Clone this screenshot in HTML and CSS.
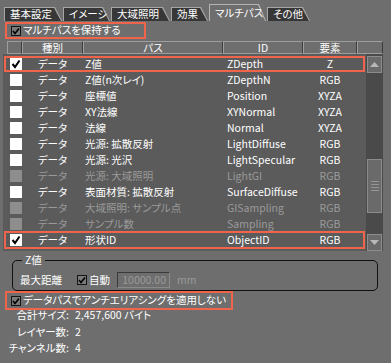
FILE: index.html
```html
<!DOCTYPE html>
<html lang="ja">
<head>
<meta charset="utf-8">
<title>マルチパス</title>
<link rel="stylesheet" href="styles.css">
</head>
<body>
<div class="tabs">
    <div class="tab t-basic">基本設定</div>
    <div class="tab t-image">イメージ</div>
    <div class="tab t-gi">大域照明</div>
    <div class="tab t-effect">効果</div>
    <div class="tab t-multi active">マルチパス</div>
    <div class="tab t-other">その他</div>
</div>

<div class="check-line keep">
    <svg class="small-check" width="10" height="10" viewBox="0 0 10 10"><rect x="0.5" y="0.5" width="9" height="9" fill="#7a7a7a" stroke="#151515"/><path d="M2 5 L4 7.5 L8 2.5" fill="none" stroke="#000" stroke-width="1.6"/></svg>
    <span>マルチパスを保持する</span>
</div>

<div class="pass-table">
    <div class="head">
        <span></span>
        <span>種別</span>
        <span>パス</span>
        <span>ID</span>
        <span>要素</span>
        <span></span>
    </div>
    <div class="list-wrap">
        <div class="rows">
            <div class="row marked">
                <i class="cb"><svg width="12" height="12" viewBox="0 0 12 12"><path d="M2.5 6 L5 9 L9.5 2.5" fill="none" stroke="#000" stroke-width="2"/></svg></i>
                <span class="kind">データ</span><span class="path">Z値</span><span class="pid">ZDepth</span><span class="elem">Z</span>
            </div>
            <div class="row">
                <i class="cb"></i>
                <span class="kind">データ</span><span class="path">Z値(n次レイ)</span><span class="pid">ZDepthN</span><span class="elem">RGB</span>
            </div>
            <div class="row">
                <i class="cb"></i>
                <span class="kind">データ</span><span class="path">座標値</span><span class="pid">Position</span><span class="elem">XYZA</span>
            </div>
            <div class="row">
                <i class="cb"></i>
                <span class="kind">データ</span><span class="path">XY法線</span><span class="pid">XYNormal</span><span class="elem">XYZA</span>
            </div>
            <div class="row">
                <i class="cb"></i>
                <span class="kind">データ</span><span class="path">法線</span><span class="pid">Normal</span><span class="elem">XYZA</span>
            </div>
            <div class="row">
                <i class="cb"></i>
                <span class="kind">データ</span><span class="path">光源: 拡散反射</span><span class="pid">LightDiffuse</span><span class="elem">RGB</span>
            </div>
            <div class="row">
                <i class="cb"></i>
                <span class="kind">データ</span><span class="path">光源: 光沢</span><span class="pid">LightSpecular</span><span class="elem">RGB</span>
            </div>
            <div class="row disabled">
                <i class="cb"></i>
                <span class="kind">データ</span><span class="path">光源: 大域照明</span><span class="pid">LightGI</span><span class="elem">RGB</span>
            </div>
            <div class="row">
                <i class="cb"></i>
                <span class="kind">データ</span><span class="path">表面材質: 拡散反射</span><span class="pid">SurfaceDiffuse</span><span class="elem">RGB</span>
            </div>
            <div class="row disabled">
                <i class="cb"></i>
                <span class="kind">データ</span><span class="path">大域照明: サンプル点</span><span class="pid">GISampling</span><span class="elem">RGB</span>
            </div>
            <div class="row disabled">
                <i class="cb"></i>
                <span class="kind">データ</span><span class="path">サンプル数</span><span class="pid">Sampling</span><span class="elem">RGB</span>
            </div>
            <div class="row marked">
                <i class="cb"><svg width="12" height="12" viewBox="0 0 12 12"><path d="M2.5 6 L5 9 L9.5 2.5" fill="none" stroke="#000" stroke-width="2"/></svg></i>
                <span class="kind">データ</span><span class="path">形状ID</span><span class="pid">ObjectID</span><span class="elem">RGB</span>
            </div>
        </div>
        <div class="scrollbar">
            <div class="sb-btn"><svg width="9" height="5" viewBox="0 0 9 5"><path d="M0 5 L4.5 0 L9 5 Z" fill="#b8b8b8"/></svg></div>
            <div class="sb-track">
                <div class="sb-thumb"><i></i><i></i><i></i><i></i></div>
            </div>
            <div class="sb-btn"><svg width="9" height="5" viewBox="0 0 9 5"><path d="M0 0 L4.5 5 L9 0 Z" fill="#b8b8b8"/></svg></div>
        </div>
    </div>
</div>

<fieldset class="group">
    <legend>Z値</legend>
    <div class="group-row">
        <span class="label">最大距離</span>
        <svg class="small-check" width="10" height="10" viewBox="0 0 10 10"><rect x="0.5" y="0.5" width="9" height="9" fill="#7a7a7a" stroke="#151515"/><path d="M2 5 L4 7.5 L8 2.5" fill="none" stroke="#000" stroke-width="1.6"/></svg>
        <span class="auto">自動</span>
        <div class="num-input">10000.00</div>
        <span class="unit">mm</span>
    </div>
</fieldset>

<div class="check-line antialias">
    <svg class="small-check" width="10" height="10" viewBox="0 0 10 10"><rect x="0.5" y="0.5" width="9" height="9" fill="#7a7a7a" stroke="#151515"/><path d="M2 5 L4 7.5 L8 2.5" fill="none" stroke="#000" stroke-width="1.6"/></svg>
    <span>データパスでアンチエリアシングを適用しない</span>
</div>

<div class="info">
    <span class="info-label">合計サイズ:</span><span>2,457,600 バイト</span>
    <span class="info-label">レイヤー数:</span><span>2</span>
    <span class="info-label">チャンネル数:</span><span>4</span>
</div>
</body>
</html>
```

FILE: styles.css
```css
* {
    box-sizing: border-box;
}

body {
    margin: 0;
    width: 391px;
    height: 363px;
    overflow: hidden;
    background-color: #6e6e6e;
    color: #ffffff;
    font-family: "Noto Sans CJK JP", sans-serif;
    font-size: 10.5px;
    font-feature-settings: "palt";
    line-height: 1;
    white-space: nowrap;
}

/* tabs */
.tabs {
    display: flex;
    align-items: flex-end;
    gap: 1px;
    height: 21px;
    padding-left: 4px;
}

.tab {
    position: relative;
    z-index: 0;
    height: 14px;
    padding-left: 6px;
    line-height: 14px;
    background-color: #a6a6a6;
    clip-path: polygon(0 0, calc(100% - 7px) 0, 100% 100%, 0 100%);
}

.tab::before {
    content: '';
    position: absolute;
    z-index: -1;
    top: 1px;
    left: 1px;
    right: 1px;
    bottom: 0;
    background-color: #373737;
    clip-path: polygon(0 0, calc(100% - 7px) 0, 100% 100%, 0 100%);
}

.t-basic { width: 58px; }
.t-image { width: 47px; }
.t-gi { width: 59px; }
.t-effect { width: 37px; }
.t-multi { width: 57px; }
.t-other { width: 43px; }

.tab.active {
    height: 17px;
    line-height: 17px;
    background-color: #b4b4b4;
}

.tab.active::before {
    background-color: #6e6e6e;
}

/* checkbox lines with red marks */
.check-line {
    display: flex;
    align-items: center;
    gap: 2px;
    border: 2px solid #f0644c;
    padding-left: 4px;
}

.small-check {
    flex: none;
}

.keep {
    width: 141px;
    height: 17px;
    margin: 1px 0 0 5px;
}

.antialias {
    width: 228px;
    height: 19px;
    margin: 0 0 0 5px;
}

/* table */
.pass-table {
    margin: 2px 8px 0 3px;
}

.head {
    display: grid;
    grid-template-columns: 15px 61px 140px 80px 54px 26px;
    height: 13px;
    margin-left: 4px;
}

.head span {
    border: 1px solid #9e9e9e;
    border-right-color: #3e3e3e;
    text-align: center;
    line-height: 11px;
}

.list-wrap {
    display: flex;
    height: 197px;
}

.rows {
    flex: 1;
    padding-top: 2px;
    background-color: #5b5b5b;
}

.row {
    position: relative;
    display: grid;
    grid-template-columns: 19px 61px 140px 80px 54px;
    align-items: center;
    height: 16px;
}

.row.marked::after {
    content: '';
    position: absolute;
    top: 0;
    bottom: 0;
    left: 1px;
    right: 1px;
    border: 2px solid #f0644c;
}

.row:last-child.marked::after {
    top: -1px;
    bottom: -1px;
}

.cb {
    display: block;
    width: 12px;
    height: 12px;
    margin-left: 7px;
    background-color: #ffffff;
}

.cb svg {
    display: block;
}

.kind {
    text-align: center;
}

.path {
    padding-left: 2px;
}

.pid {
    padding-left: 4px;
}

.elem {
    text-align: center;
}

.row.disabled {
    color: #9a9a9a;
}

.row.disabled .cb {
    background-color: #8e8e8e;
}

/* scrollbar */
.scrollbar {
    display: flex;
    flex-direction: column;
    width: 17px;
    background-color: #4a4a4a;
    padding: 2px 1px 0 1px;
}

.sb-btn {
    display: flex;
    align-items: center;
    justify-content: center;
    height: 17px;
    background-color: #6a6a6a;
    border: 1px solid #8c8c8c;
}

.sb-track {
    flex: 1;
    padding-top: 86px;
}

.sb-thumb {
    display: flex;
    flex-direction: column;
    align-items: center;
    justify-content: center;
    gap: 2px;
    height: 54px;
    background-color: #6a6a6a;
    border: 1px solid #8c8c8c;
}

.sb-thumb i {
    display: block;
    width: 8px;
    height: 1px;
    background-color: #959595;
}

/* Z group */
.group {
    margin: 3px 13px 0 12px;
    padding: 5px 0 1px 7px;
    border: 1px solid #111111;
    border-radius: 5px;
}

.group legend {
    margin-left: 2px;
    padding: 0 3px;
    line-height: 12px;
}

.group-row {
    display: flex;
    align-items: center;
    height: 18px;
}

.label {
    width: 57px;
}

.auto {
    margin-left: 2px;
}

.num-input {
    width: 53px;
    height: 16px;
    margin-left: 7px;
    padding-right: 3px;
    border: 1px solid #3a3a3a;
    border-right-color: #8a8a8a;
    border-bottom-color: #8a8a8a;
    color: #9a9a9a;
    text-align: right;
    line-height: 14px;
}

.unit {
    margin-left: 7px;
    color: #9a9a9a;
}

/* summary */
.info {
    display: grid;
    grid-template-columns: 61px auto;
    column-gap: 6px;
    grid-auto-rows: 16.5px;
    align-items: center;
    padding: 0 0 0 8px;
    margin-top: -3px;
}

.info-label {
    text-align: right;
}
```
